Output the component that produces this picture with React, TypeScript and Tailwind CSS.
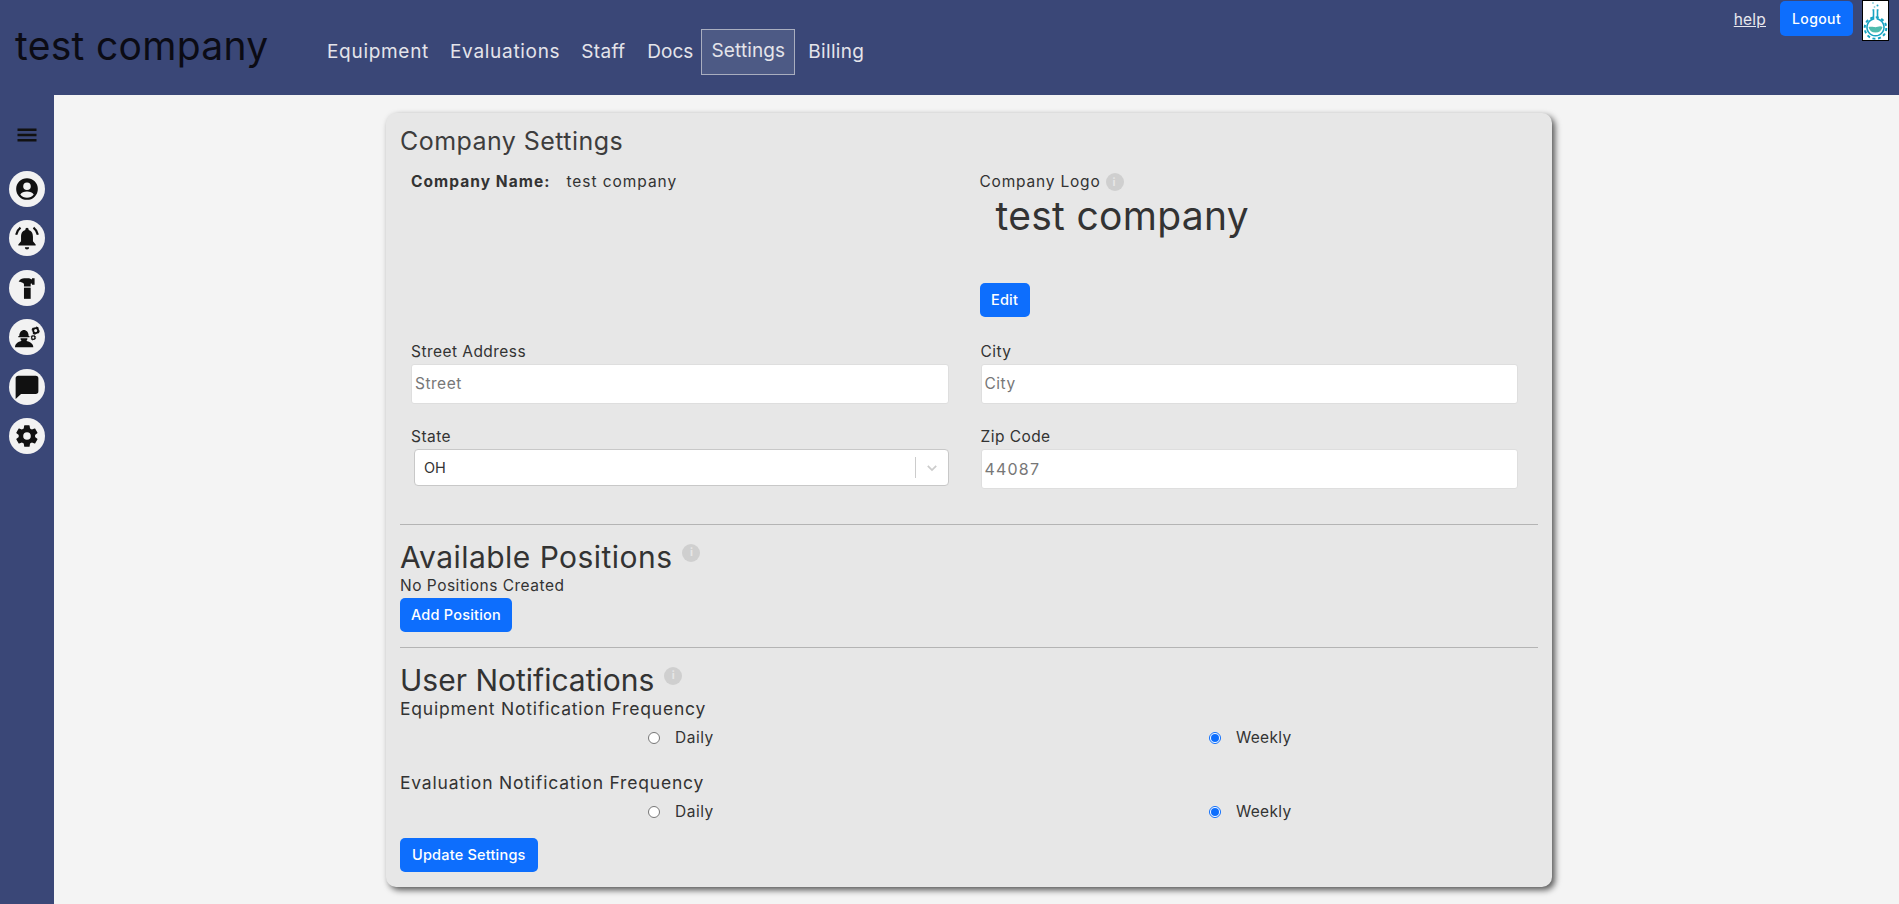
import React from "react";

const font = { fontFamily: "Inter, 'Noto Sans', sans-serif" };

function Info() {
  return (
    <span className="inline-flex w-[18px] h-[18px] rounded-full bg-[#cfcfcf] items-center justify-center text-[#e6e6e6] text-[11px] font-bold leading-none">i</span>
  );
}

function Btn({ children, cls = "" }: { children: React.ReactNode; cls?: string }) {
  return (
    <button className={`bg-[#0d6efd] text-white rounded-[5px] text-[14.5px] font-medium h-[34px] tracking-[0.2px] ${cls}`}>{children}</button>
  );
}

function Field({ label, placeholder, value }: { label: string; placeholder?: string; value?: string }) {
  return (
    <div className="flex flex-col">
      <label className="text-[15.5px] tracking-[0.45px] leading-[22px] mb-px text-[#333]">{label}</label>
      <div className={`h-[40px] bg-white rounded-[3px] border border-[#dedede] flex items-center px-[3px] text-[#777] ${value ? "text-[16px] tracking-[1.2px]" : "text-[15.5px] tracking-[0.5px]"}`}>{value ?? placeholder}</div>
    </div>
  );
}

function Radio({ checked }: { checked?: boolean }) {
  return checked ? (
    <span className="w-3 h-3 rounded-full border border-[#0d6efd] bg-white flex items-center justify-center">
      <span className="w-2 h-2 rounded-full bg-[#0d6efd]" />
    </span>
  ) : (
    <span className="w-3 h-3 rounded-full border border-[#777] bg-white" />
  );
}

function Frequency({ title, top }: { title: string; top: string }) {
  return (
    <div>
      <div className={`text-[17.5px] tracking-[0.8px] leading-[24px] text-[#333] ${top}`}>{title}</div>
      <div className="grid grid-cols-2 h-[24px] mt-[5px] items-center text-[15.5px] tracking-[0.5px] text-[#333]">
        <div className="flex items-center pl-[248px] gap-[15px]"><Radio /><span>Daily</span></div>
        <div className="flex items-center pl-[240px] gap-[15px]"><Radio checked /><span className="tracking-[0.3px]">Weekly</span></div>
      </div>
    </div>
  );
}

function IconCircle({ children }: { children: React.ReactNode }) {
  return (
    <div className="w-9 h-9 rounded-full bg-[#f2f2f2] flex items-center justify-center">
      <svg viewBox="0 0 24 24" className="w-[26px] h-[26px]" fill="#111">{children}</svg>
    </div>
  );
}

function Gear({ cx, cy, r }: { cx: number; cy: number; r: number }) {
  return (
    <g fill="none" stroke="#111">
      <circle cx={cx} cy={cy} r={r * 0.62} strokeWidth={r * 0.45} />
      <circle cx={cx} cy={cy} r={r * 0.88} strokeWidth={r * 0.3} strokeDasharray={`${r * 0.68} ${r * 0.7}`} />
    </g>
  );
}

export default function App() {
  return (
    <div className="min-h-[904px] h-[904px] overflow-hidden flex flex-col bg-[#f4f4f4]" style={font}>
      <header className="h-[95px] bg-[#3a4777] flex shrink-0 relative">
        <div className="text-[39px] tracking-[0.3px] text-[#0b0b14] pl-[15px] pt-[20px] leading-[52px] w-[322px] whitespace-nowrap">test company</div>
        <nav className="flex items-start pt-[29px] text-[19px] text-[#e4e4ea]">
          <a className="px-[5px] mt-[11px] mr-[11px] leading-[24px] tracking-[0.7px]">Equipment</a>
          <a className="px-[5px] mt-[11px] mr-[11px] leading-[24px] tracking-[0.7px]">Evaluations</a>
          <a className="px-[5px] mt-[11px] mr-[12px] leading-[24px] tracking-[0.3px]">Staff</a>
          <a className="px-[5px] mt-[11px] leading-[24px]">Docs</a>
          <a className="h-[46px] w-[94px] ml-[3px] mr-[8px] border border-[#a9aebf] bg-[#4d5a85] text-center leading-[42px] tracking-[0.1px]">Settings</a>
          <a className="px-[5px] mt-[11px] leading-[24px] tracking-[0.3px]">Billing</a>
        </nav>
        <div className="absolute right-[10px] top-0 flex items-start">
          <a className="underline text-[15.5px] tracking-[0.2px] text-[#e8e8ee] mt-[8px] mr-[14px]">help</a>
          <button className="mt-[1px] w-[73px] h-[35px] bg-[#0d6efd] rounded-[5px] text-white text-[14px] tracking-[0.4px] font-medium mr-[9px]">Logout</button>
          <div className="w-[27px] h-[41px] bg-white border border-black">
            <svg viewBox="0 0 25 39" className="w-full h-full">
              <circle cx="10" cy="2" r="1" fill="#8fd3dc" /><circle cx="14.500" cy="4.500" r="1" fill="#22a8c4" /><circle cx="11.500" cy="6" r="0.900" fill="#8fd3dc" />
              <path d="M9.500 9h1v9a8.500 8.500 0 1 0 4 0V9h1" fill="none" stroke="#17a3c2" strokeWidth="1.600" />
              <path d="M5.500 26a7.200 7.200 0 0 0 14 0c-3-1.800-5.500 .8-8.500 0-2-.5-3.800-.5-5.500 0z" fill="#4fbcae" />
              <circle cx="12.500" cy="27" r="10.800" fill="none" stroke="#17a3c2" strokeWidth="2" strokeDasharray="3 2.650" />
            </svg>
          </div>
        </div>
      </header>
      <div className="flex flex-1 min-h-0">
        <aside className="w-[54px] bg-[#3a4777] shrink-0 flex flex-col items-center pt-[28px]">
          <svg viewBox="0 0 24 24" className="w-[24px] h-[24px] mb-[24px]" fill="#111"><path d="M2.500 5.500h19V8h-19zM2.500 10.800h19v2.500h-19zM2.500 16.100h19v2.500h-19z" /></svg>
          <div className="flex flex-col gap-[13.4px] items-center">
            <IconCircle><path fillRule="evenodd" d="M12 2a10 10 0 1 0 0 20 10 10 0 0 0 0-20zm0 4a3.500 3.500 0 1 1 0 7 3.500 3.500 0 0 1 0-7zm0 14a8 8 0 0 1-6.200-3c.8-1.800 3.600-2.800 6.200-2.800s5.400 1 6.200 2.800A8 8 0 0 1 12 20z" /></IconCircle>
            <IconCircle>
              <path d="M12 2.500a1.500 1.500 0 0 1 1.500 1.500v.6c3 .9 4 3.400 4 6.400v4l2.500 3v1H4v-1l2.500-3v-4c0-3 1-5.500 4-6.400V4A1.500 1.500 0 0 1 12 2.500zM10 20.500h4a2 2 0 0 1-4 0z" />
              <path d="M6 2.500A11 11 0 0 0 2 9M18 2.500A11 11 0 0 1 22 9" fill="none" stroke="#111" strokeWidth="2" />
            </IconCircle>
            <IconCircle>
              <path d="M4.300 6.200C5.500 4 7.500 3.100 9.500 3.100H14l2.600 1.100V3.100H19V9h-2.400V7.800l-1.200.2v2.500H9.200V8C7.500 6.800 6 6.200 4.300 6.200z" />
              <path d="M9.200 11.700h6.200V22H9.200z" />
            </IconCircle>
            <IconCircle>
              <path d="M4.900 11C4.900 7.500 7 5.500 9.200 5.500c2.300 0 4.300 2 4.300 5.500h.8v1.200H4V11z" />
              <path d="M.9 21.500c0-3.800 3.800-6 8.300-6s8.600 2.200 8.600 6z" />
              <path d="M6 13.200h6.400a3.200 3.200 0 0 1-6.400 0z" />
              <Gear cx={20} cy={6.100} r={3.700} />
              <Gear cx={17.800} cy={12.600} r={2.500} />
            </IconCircle>
            <IconCircle><path d="M4 1.500h16A2.500 2.500 0 0 1 22.500 4v12a2.500 2.500 0 0 1-2.500 2.500H6.500l-5 4.500V4A2.500 2.500 0 0 1 4 1.500z" /></IconCircle>
            <IconCircle><path fillRule="evenodd" d="M19.400 13c.1-.3.100-.7.100-1s0-.7-.1-1l2.100-1.600c.2-.2.200-.4.100-.6l-2-3.500c-.1-.2-.4-.3-.6-.2l-2.500 1a7.300 7.300 0 0 0-1.700-1l-.4-2.600c0-.3-.2-.5-.5-.5h-4c-.3 0-.5.200-.5.400l-.4 2.700c-.6.200-1.200.6-1.700 1l-2.500-1c-.2-.1-.5 0-.6.200l-2 3.500c-.1.200-.1.500.1.600L4.400 11c-.1.300-.1.700-.1 1s0 .7.100 1l-2.100 1.600c-.2.200-.2.400-.1.600l2 3.500c.1.200.4.300.6.200l2.500-1c.5.400 1.100.7 1.700 1l.4 2.600c0 .3.200.5.500.5h4c.3 0 .5-.2.500-.4l.4-2.700c.6-.2 1.200-.6 1.700-1l2.500 1c.2.100.5 0 .6-.2l2-3.500c.1-.2.100-.5-.1-.6zM12 15.500a3.500 3.500 0 1 1 0-7 3.500 3.500 0 0 1 0 7z" /></IconCircle>
          </div>
        </aside>
        <main className="flex-1 min-w-0 pl-[332px] pt-[18px]">
          <div className="w-[1166px] h-[774px] bg-[#e7e7e7] rounded-[10px] shadow-[3px_3px_6px_rgba(0,0,0,0.65)] px-[14px] pt-[11px]">
            <h2 className="text-[25px] tracking-[0.45px] leading-[34px] text-[#3d3d3d]">Company Settings</h2>
            <div className="grid grid-cols-2 gap-x-[32px] pl-[11px] pr-[20px] mt-[12px]">
              <div className="h-[171px] text-[15.5px] text-[#333] flex gap-[16px] leading-[24px]">
                <span className="font-bold tracking-[1.05px]">Company Name:</span><span className="tracking-[0.95px]">test company</span>
              </div>
              <div className="h-[171px]">
                <div className="flex items-center gap-[5px] text-[15.5px] tracking-[0.8px] leading-[24px] text-[#333] -ml-px">Company Logo <Info /></div>
                <div className="text-[39px] tracking-[0.3px] leading-[50px] pl-[15px] mt-[-3px] text-[#333]">test company</div>
                <Btn cls="mt-[42px] w-[50px] -ml-px">Edit</Btn>
              </div>
              <Field label="Street Address" placeholder="Street" />
              <Field label="City" placeholder="City" />
              <div className="flex flex-col mt-[22px]">
                <label className="text-[15.5px] tracking-[0.45px] leading-[22px] mb-px text-[#333]">State</label>
                <div className="ml-[3px] h-[37px] bg-white rounded-[4px] border border-[#c8c8c8] flex items-center text-[14.5px] text-[#333]">
                  <span className="pl-[9px] flex-1">OH</span>
                  <span className="w-px h-[21px] bg-[#ccc]" />
                  <svg viewBox="0 0 20 20" className="w-[14px] h-[14px] mx-[9px]" fill="none" stroke="#ccc" strokeWidth="2.500"><path d="M4 7l6 6 6-6" /></svg>
                </div>
              </div>
              <div className="mt-[22px]"><Field label="Zip Code" value="44087" /></div>
            </div>
            <hr className="border-0 h-px bg-[#b4b4b4] mt-[35px]" />
            <div className="flex items-start mt-[13px]">
              <h3 className="text-[30px] tracking-[0.45px] leading-[38px] text-[#333]">Available Positions</h3>
              <span className="ml-[10px]"><Info /></span>
            </div>
            <div className="text-[15.5px] tracking-[0.5px] leading-[20px] text-[#333]">No Positions Created</div>
            <Btn cls="mt-[2px] block px-[11px]">Add Position</Btn>
            <hr className="border-0 h-px bg-[#b4b4b4] mt-[15px]" />
            <div className="flex items-start mt-[13px]">
              <h3 className="text-[30px] leading-[38px] text-[#333]">User Notifications</h3>
              <span className="ml-[10px]"><Info /></span>
            </div>
            <div className="mt-[-2px]"><Frequency title="Equipment Notification Frequency" top="" /></div>
            <Frequency title="Evaluation Notification Frequency" top="mt-[21px]" />
            <Btn cls="mt-[14px] block px-[12px]">Update Settings</Btn>
          </div>
        </main>
      </div>
    </div>
  );
}
